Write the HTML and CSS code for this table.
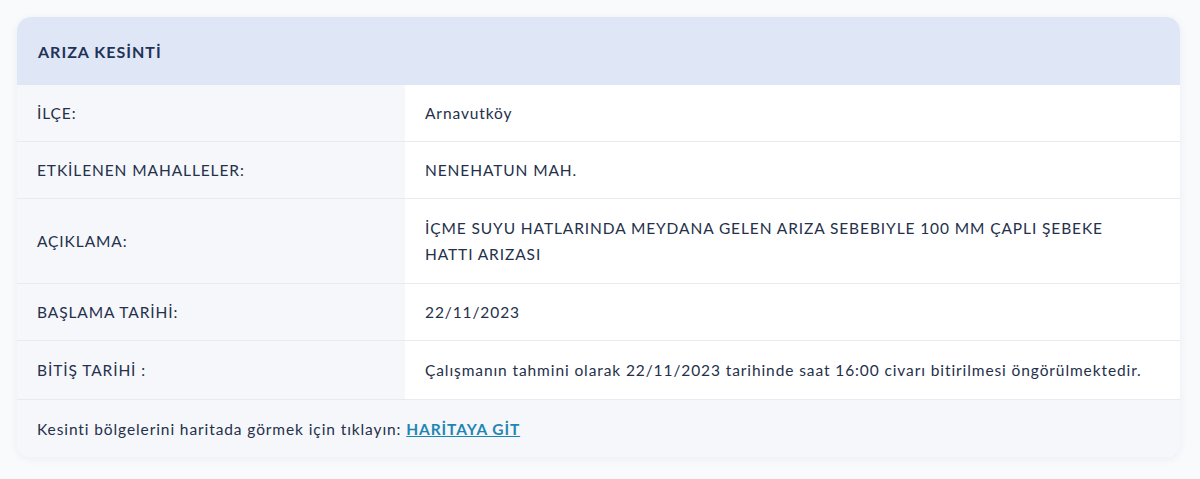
FILE: index.html
```html
<!DOCTYPE html>
<html lang="tr">
<head>
    <meta charset="UTF-8">
    <meta name="viewport" content="width=device-width, initial-scale=1.0">
    <title>Arıza Kesinti</title>
    <link rel="stylesheet" href="styles.css">
</head>
<body>
    <div class="card">
        <table class="outage">
            <thead>
                <tr><th colspan="2">ARIZA KESİNTİ</th></tr>
            </thead>
            <tbody>
                <tr class="row"><td class="label">İLÇE:</td><td class="value">Arnavutköy</td></tr>
                <tr class="row"><td class="label">ETKİLENEN MAHALLELER:</td><td class="value">NENEHATUN MAH.</td></tr>
                <tr class="row tall"><td class="label">AÇIKLAMA:</td><td class="value">İÇME SUYU HATLARINDA MEYDANA GELEN ARIZA SEBEBIYLE 100 MM ÇAPLI ŞEBEKE HATTI ARIZASI</td></tr>
                <tr class="row"><td class="label">BAŞLAMA TARİHİ:</td><td class="value">22/11/2023</td></tr>
                <tr class="row wide"><td class="label">BİTİŞ TARİHİ :</td><td class="value">Çalışmanın tahmini olarak 22/11/2023 tarihinde saat 16:00 civarı bitirilmesi öngörülmektedir.</td></tr>
                <tr class="foot"><td colspan="2">Kesinti bölgelerini haritada görmek için tıklayın: <a href="#">HARİTAYA GİT</a></td></tr>
            </tbody>
        </table>
    </div>
</body>
</html>
```

FILE: styles.css
```css
body { margin: 0; padding: 17px 20px 22px 17px; background-color: #f8fafc; font-family: Lato, "Noto Sans", sans-serif; color: #25304a; }
.card { background-color: #ffffff; border-radius: 14px; overflow: hidden; box-shadow: 0 2px 10px rgba(30, 50, 90, 0.06); }
.outage { width: 100%; border-collapse: separate; border-spacing: 0; font-size: 15.5px; letter-spacing: 0.9px; }
.outage th { background-color: #dfe7f6; color: #1f3358; text-align: left; font-weight: 700; font-size: 16px; letter-spacing: 1px; height: 68px; padding: 0 21px; }
.row td { border-bottom: 1px solid #e7ebf1; padding: 0 20px; height: 56px; line-height: 26px; }
.row.tall td { height: 84px; }
.row.wide td { height: 58px; }
.row.tall .value { padding-right: 60px; }
.label { width: 348px; background-color: #f5f7fb; }
.value { background-color: #ffffff; }
.foot td { background-color: #f5f7fb; height: 57px; padding: 0 20px; }
.foot a { color: #1f86b3; font-weight: 700; text-decoration: underline; }
```
